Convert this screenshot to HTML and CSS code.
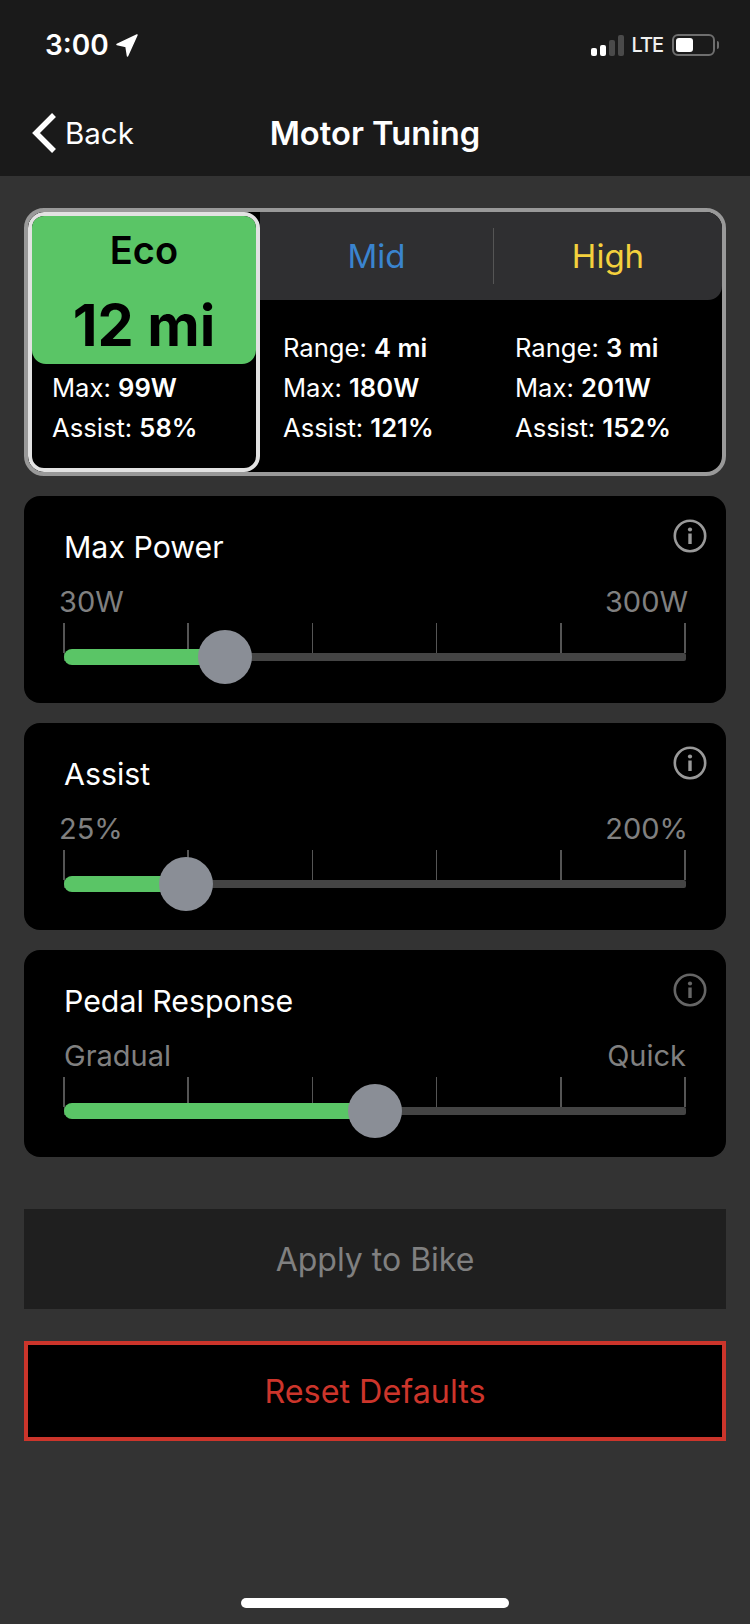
FILE: index.html
```html
<!DOCTYPE html>
<html lang="en">
  <head>
    <meta charset="UTF-8" />
    <meta name="viewport" content="width=device-width, initial-scale=1.0" />
    <title>Motor Tuning</title>
    <link rel="stylesheet" href="styles.css">
  </head>
  <body>
    <div class="screen">

      <div class="top">
        <div class="status">
          <div class="clock">
            <span>3:00</span>
            <svg class="arrow" width="22" height="23" viewBox="0 0 22 23"><path d="M21 1 L1 10.5 L10 12.5 L11.5 22 Z" fill="#fff" stroke="#fff" stroke-width="1.5" stroke-linejoin="round"/></svg>
          </div>
          <div class="indicators">
            <div class="signal">
              <i class="bar on b1"></i>
              <i class="bar on b2"></i>
              <i class="bar b3"></i>
              <i class="bar b4"></i>
            </div>
            <span class="lte">LTE</span>
            <div class="battery">
              <div class="battery-level"></div>
            </div>
            <div class="battery-cap"></div>
          </div>
        </div>
        <div class="nav">
          <div class="back">
            <svg width="28" height="42" viewBox="0 0 28 42"><path d="M24 3 L6 21 L24 39" fill="none" stroke="#fff" stroke-width="5.5"/></svg>
            <span>Back</span>
          </div>
          <h1 class="title">Motor Tuning</h1>
        </div>
      </div>

      <div class="content">
        <div class="modes">
          <div class="mode-eco">
            <div class="eco-head">
              <div class="eco-name">Eco</div>
              <div class="eco-range">12 mi</div>
            </div>
            <div class="stats eco-stats">
              <p>Max: <b>99W</b></p>
              <p>Assist: <b>58%</b></p>
            </div>
          </div>
          <div class="mode-rest">
            <div class="tabs">
              <div class="tab mid">Mid</div>
              <div class="tab high">High</div>
            </div>
            <div class="rest-stats">
              <div class="stats">
                <p>Range: <b>4 mi</b></p>
                <p>Max: <b>180W</b></p>
                <p>Assist: <b>121%</b></p>
              </div>
              <div class="stats">
                <p>Range: <b>3 mi</b></p>
                <p>Max: <b>201W</b></p>
                <p>Assist: <b>152%</b></p>
              </div>
            </div>
          </div>
        </div>

        <div class="card">
          <svg class="info" width="34" height="34" viewBox="0 0 34 34"><circle cx="17" cy="17" r="15.2" fill="none" stroke="currentColor" stroke-width="2.6"/><circle cx="17" cy="10.5" r="2.1" fill="currentColor"/><rect x="15.3" y="14.5" width="3.4" height="10.5" fill="currentColor"/></svg>
          <h3 class="heading">Max Power</h3>
          <div class="range-labels"><span class="shift-left">30W</span><span class="shift-right">300W</span></div>
          <div class="slider">
            <div class="ticks"><i></i><i></i><i></i><i></i><i></i><i></i></div>
            <div class="track">
              <div class="fill" style="width: 161px"></div>
              <div class="thumb" style="left: 161px"></div>
            </div>
          </div>
        </div>

        <div class="card">
          <svg class="info" width="34" height="34" viewBox="0 0 34 34"><circle cx="17" cy="17" r="15.2" fill="none" stroke="currentColor" stroke-width="2.6"/><circle cx="17" cy="10.5" r="2.1" fill="currentColor"/><rect x="15.3" y="14.5" width="3.4" height="10.5" fill="currentColor"/></svg>
          <h3 class="heading">Assist</h3>
          <div class="range-labels"><span class="shift-left">25%</span><span class="shift-right">200%</span></div>
          <div class="slider">
            <div class="ticks"><i></i><i></i><i></i><i></i><i></i><i></i></div>
            <div class="track">
              <div class="fill" style="width: 122px"></div>
              <div class="thumb" style="left: 122px"></div>
            </div>
          </div>
        </div>

        <div class="card">
          <svg class="info dim" width="34" height="34" viewBox="0 0 34 34"><circle cx="17" cy="17" r="15.2" fill="none" stroke="currentColor" stroke-width="2.6"/><circle cx="17" cy="10.5" r="2.1" fill="currentColor"/><rect x="15.3" y="14.5" width="3.4" height="10.5" fill="currentColor"/></svg>
          <h3 class="heading">Pedal Response</h3>
          <div class="range-labels"><span>Gradual</span><span>Quick</span></div>
          <div class="slider">
            <div class="ticks"><i></i><i></i><i></i><i></i><i></i><i></i></div>
            <div class="track">
              <div class="fill" style="width: 311px"></div>
              <div class="thumb" style="left: 311px"></div>
            </div>
          </div>
        </div>

        <div class="btn btn-apply">Apply to Bike</div>
        <div class="btn btn-reset">Reset Defaults</div>
      </div>

      <div class="home-bar"></div>
    </div>
  </body>
</html>
```

FILE: styles.css
```css
/* ---- RESET ---- */
* {
  padding: 0;
  margin: 0;
  box-sizing: border-box;
  font-family: Inter, "Liberation Sans", sans-serif;
}

body {
  background: #333333;
}

.screen {
  position: relative;
  width: 750px;
  height: 1624px;
  overflow: hidden;
  background: #333333;
  color: white;
}

/* ---- TOP BAR ---- */
.top {
  height: 176px;
  background: #1a1a1a;
}

.status {
  display: flex;
  justify-content: space-between;
  align-items: center;
  height: 90px;
  padding: 0 31px 0 45px;
}

.clock {
  display: flex;
  align-items: center;
  gap: 7px;
  font-size: 28px;
  font-weight: 600;
}

.indicators {
  display: flex;
  align-items: center;
}

.signal {
  display: flex;
  align-items: flex-end;
  gap: 3px;
  height: 21px;
}

.bar {
  width: 6px;
  border-radius: 2px;
  background: #4a4a4a;
}

.bar.on {
  background: white;
}

.b1 { height: 8px; }
.b2 { height: 11px; }
.b3 { height: 16px; }
.b4 { height: 21px; }

.lte {
  margin-left: 7px;
  font-size: 20px;
  font-weight: 500;
  letter-spacing: -1px;
  color: #f0f0f0;
}

.battery {
  width: 43px;
  height: 22px;
  margin-left: 9px;
  padding: 2px;
  border: 2px solid #6e6e6e;
  border-radius: 6px;
}

.battery-level {
  width: 17px;
  height: 100%;
  border-radius: 3px;
  background: white;
}

.battery-cap {
  width: 2px;
  height: 8px;
  margin-left: 2px;
  border-radius: 0 2px 2px 0;
  background: #6e6e6e;
}

.nav {
  position: relative;
  display: flex;
  align-items: center;
  justify-content: center;
  height: 86px;
}

.back {
  position: absolute;
  left: 30px;
  top: 22px;
  display: flex;
  align-items: center;
  gap: 7px;
  font-size: 29.5px;
}

.title {
  font-size: 32.7px;
  font-weight: 600;
}

/* ---- CONTENT ---- */
.content {
  display: flex;
  flex-direction: column;
  gap: 20px;
  padding: 32px 24px 0;
}

/* ---- MODE PICKER ---- */
.modes {
  display: flex;
  height: 268px;
  overflow: hidden;
  border: 4px solid #999999;
  border-radius: 20px;
  background: black;
}

.mode-eco {
  display: flex;
  flex-direction: column;
  flex-shrink: 0;
  width: 232px;
  overflow: hidden;
  border: 4px solid #e2e2e2;
  border-radius: 16px;
  background: black;
}

.eco-head {
  height: 148px;
  padding-top: 12px;
  border-radius: 0 0 14px 14px;
  background: #5ac566;
  color: black;
  text-align: center;
}

.eco-name {
  font-size: 38px;
  font-weight: 600;
  line-height: 44px;
}

.eco-range {
  margin-top: 20px;
  font-size: 57.5px;
  font-weight: 700;
  line-height: 66px;
}

.eco-stats {
  padding: 4px 0 0 20px;
}

.stats p {
  font-size: 25.6px;
  line-height: 40px;
  white-space: nowrap;
}

.stats b {
  font-weight: 600;
}

.mode-rest {
  flex: 1;
  min-width: 0;
  display: flex;
  flex-direction: column;
}

.tabs {
  display: flex;
  align-items: center;
  height: 88px;
  border-radius: 0 0 14px 0;
  background: #2f2f31;
}

.tab {
  flex: 1;
  font-size: 33px;
  line-height: 56px;
  text-align: center;
}

.mid {
  flex: 0 0 234px;
  border-right: 1.5px solid #555555;
  color: #3a84cf;
}

.high {
  color: #f4d13d;
}

.rest-stats {
  display: flex;
  padding: 28px 0 0 23px;
}

.rest-stats .stats {
  flex-shrink: 0;
  width: 232px;
}

/* ---- SLIDER CARDS ---- */
.card {
  position: relative;
  height: 207px;
  padding: 32px 40px 0;
  border-radius: 16px;
  background: black;
}

.heading {
  font-size: 30.3px;
  font-weight: 400;
  line-height: 38px;
}

.info {
  position: absolute;
  top: 23px;
  right: 19px;
  color: #999999;
}

.info.dim {
  color: #666666;
}

.range-labels {
  display: flex;
  justify-content: space-between;
  margin-top: 18px;
  font-size: 29px;
  line-height: 36px;
  color: #808080;
}

.shift-left {
  margin-left: -5px;
}

.shift-right {
  margin-right: -2px;
}

.slider {
  margin-top: 3px;
}

.ticks {
  display: flex;
  justify-content: space-between;
  height: 30px;
  margin-left: -1px;
}

.ticks i {
  width: 1.5px;
  background: #555555;
}

.track {
  position: relative;
  height: 8px;
  border-radius: 0 2px 2px 0;
  background: #444444;
}

.fill {
  position: absolute;
  top: -4px;
  left: 0;
  height: 16px;
  border-radius: 8px;
  background: #5ac566;
}

.thumb {
  position: absolute;
  top: -23px;
  width: 54px;
  height: 54px;
  margin-left: -27px;
  border-radius: 50%;
  background: #8a8e96;
}

/* ---- BUTTONS ---- */
.btn {
  display: flex;
  align-items: center;
  justify-content: center;
  height: 100px;
  font-size: 32px;
}

.btn-apply {
  margin-top: 32px;
  background: #1f1f1f;
  color: #808080;
}

.btn-reset {
  margin-top: 12px;
  border: 4px solid #cc352b;
  background: black;
  font-size: 32.3px;
  color: #cc352b;
}

.home-bar {
  position: absolute;
  left: 241px;
  bottom: 16px;
  width: 268px;
  height: 10px;
  border-radius: 5px;
  background: white;
}
```
